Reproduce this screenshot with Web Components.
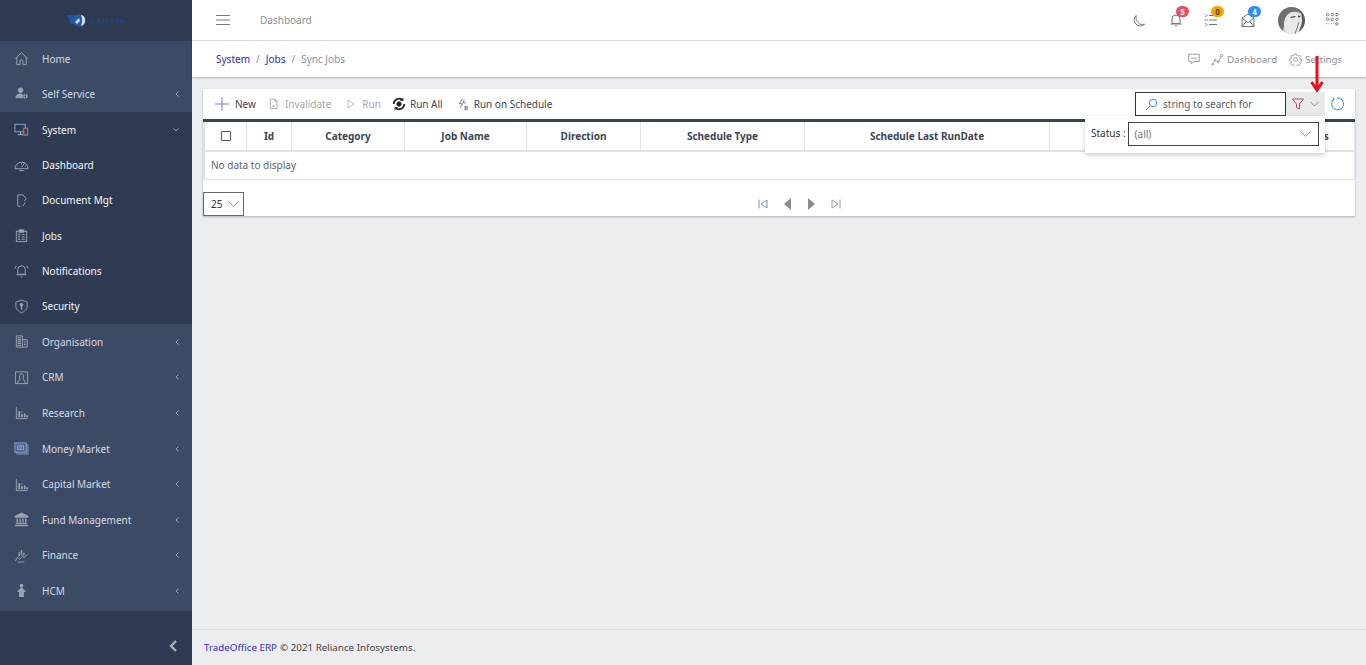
<!DOCTYPE html>
<html>
<head>
<meta charset="utf-8">
<title>Sync Jobs</title>
<style>
  html, body { margin: 0; height: 100%; overflow: hidden; }
  body { font-family: "Noto Sans", "Open Sans", sans-serif; font-size: 10px; background: #ebedf0; }
  app-shell { height: 665px; }
</style>
</head>
<body>
<app-shell>
  <side-bar slot="side">
    <div class="group light" slot="a" style="--row:35.2px;padding-bottom:.6px">
      <nav-item icon="home">Home</nav-item>
      <nav-item icon="self" arrow="left">Self Service</nav-item>
    </div>
    <div class="group" slot="b" style="--row:35.33px">
      <nav-item icon="system" arrow="down" bright>System</nav-item>
      <nav-item icon="gauge" bright>Dashboard</nav-item>
      <nav-item icon="doc" bright>Document Mgt</nav-item>
      <nav-item icon="clip" bright>Jobs</nav-item>
      <nav-item icon="bell" bright>Notifications</nav-item>
      <nav-item icon="shield" bright>Security</nav-item>
    </div>
    <div class="group light" slot="c" style="--row:35.6px;padding-bottom:2.2px">
      <nav-item icon="org" arrow="left">Organisation</nav-item>
      <nav-item icon="crm" arrow="left">CRM</nav-item>
      <nav-item icon="bars" arrow="left">Research</nav-item>
      <nav-item icon="money" arrow="left">Money Market</nav-item>
      <nav-item icon="bars" arrow="left">Capital Market</nav-item>
      <nav-item icon="bank" arrow="left">Fund Management</nav-item>
      <nav-item icon="finance" arrow="left">Finance</nav-item>
      <nav-item icon="person" arrow="left">HCM</nav-item>
    </div>
  </side-bar>
  <top-bar slot="main"></top-bar>
  <sub-bar slot="main"></sub-bar>
  <jobs-card slot="main"></jobs-card>
  <app-footer slot="foot"></app-footer>
</app-shell>

<script>
var ICONS = {
  home: '<path d="M1.500 8L8 1.800 14.500 8M3 7v7.500h3.500V11a1.500 1.500 0 0 1 3 0v3.500H13V7"/>',
  self: '<circle cx="7" cy="4.500" r="2.500" fill="currentColor"/><path d="M2 12.500c0-2.500 2-4 4.500-4 1 0 2 .2 2.500.6v3.400z" fill="currentColor"/><circle cx="12" cy="11" r="1.700" stroke-width="1.600" stroke-dasharray="2 .7"/>',
  system: '<rect x="1" y="2.500" width="11" height="8" stroke="#7fb0d8"/><path d="M4 13.500h6M7 10.500v3" stroke="#a9c3d8"/><rect x="10.500" y="6.500" width="4" height="7.500" fill="#2f3b52" stroke="#c08a7a"/>',
  gauge: '<path d="M1 12.500a7 7 0 1 1 14 0zM8 11l3.500-5M3.500 9.500l1 .5M12.500 9.500l-1 .5M8 6.500V8M5.500 14.500h5"/>',
  doc: '<path d="M4 14V2h5.500l3.500 4-2 2.500M4 14h3M12 10l-2.500 4"/>',
  clip: '<rect x="2.500" y="3.500" width="11" height="11"/><rect x="5.500" y="2" width="5" height="2.500" fill="currentColor"/><path d="M8 7h3.500M8 9.500h3.500M8 12h3.500" /><path d="M4.500 7h2M4.500 9.500h2M4.500 12h2" stroke-width="1.500"/>',
  bell: '<path d="M4 12V7a4 4 0 0 1 8 0v5zM2.500 12.500h11M7 14.800h2M1 6l1.500-3M15 6l-1.500-3"/>',
  shield: '<path d="M8 1.200l6 2v5c0 3-3 5.300-6 6.500-3-1.200-6-3.500-6-6.500v-5z"/><circle cx="8" cy="6" r="1.500" fill="currentColor"/><path d="M8 7v4.500" stroke-width="1.500"/>',
  org: '<path d="M2.500 14V2h6.500v12M9 6h5v8H2.500" stroke-width="1"/><path d="M4 4h3.500M4 6h3.500M4 8h3.500M4 10h3.500M4 12h3.500M10.500 8.500h2M10.500 11h2" stroke-width="1.200"/>',
  crm: '<path d="M1.500 2h13v12.500h-13zM4 14.500c0-2.500.5-3.500 2.500-4.500-1-2-1-6 1.500-6s2.500 4 1.500 6c2 1 2.500 2 2.500 4.500"/>',
  bars: '<path d="M2.500 2v12.500h12" stroke-width="1"/><path d="M5.500 13V6.500M8.500 13V9.500M8.500 8V7M11.500 13V9M14 13v-2" stroke-width="1.800"/>',
  money: '<rect x="3" y="4" width="12" height="10" fill="#55678a" stroke="#7d8ca6"/><rect x="1" y="2" width="12" height="10" fill="#4f6690" stroke="#86a3cc"/><rect x="4" y="5" width="6" height="4"/><circle cx="7" cy="7" r="1"/>',
  bank: '<path d="M8 1l7 3.500v1H1v-1z" fill="currentColor"/><path d="M3.500 7v4.500M6.500 7v4.500M9.500 7v4.500M12.500 7v4.500" stroke-width="1.500"/><path d="M2 12.500h12M1 14.500h14" stroke-width="1.300"/>',
  finance: '<path d="M1.500 14l2-4 2.500 2 3-3 2 1 3-3" stroke-width="1"/><path d="M5.500 9V4.500M8 8V2M10.500 8V5" stroke-width="1.500"/><path d="M4 15h7"/>',
  person: '<circle cx="8" cy="2.800" r="2" fill="currentColor" stroke="none"/><path d="M8 4.500l5 4.500-2.500.5V15h-5V9.500L3 9z" fill="currentColor" stroke="none"/>'
};

function svg(inner, size, vb, extra) {
  return '<svg xmlns="http://www.w3.org/2000/svg" width="' + size + '" height="' + size + '" viewBox="0 0 ' + (vb || 16) + ' ' + (vb || 16) + '" fill="none" stroke="currentColor" stroke-width="1" ' + (extra || '') + '>' + inner + '</svg>';
}

class AppShell extends HTMLElement {
  constructor() {
    super();
    this.attachShadow({mode: 'open'});
    this.shadowRoot.innerHTML = `
      <style>
        :host { display: flex; width: 1366px; }
        .main { flex: 1; display: flex; flex-direction: column; min-width: 0; }
        .fill { flex: 1; display: flex; flex-direction: column; }
        ::slotted(side-bar) { flex: none; }
      </style>
      <slot name="side"></slot>
      <div class="main"><div class="fill"><slot name="main"></slot></div><slot name="foot"></slot></div>`;
  }
}
customElements.define('app-shell', AppShell);

class SideBar extends HTMLElement {
  constructor() {
    super();
    this.attachShadow({mode: 'open'});
    this.shadowRoot.innerHTML = `
      <style>
        :host { display: flex; flex-direction: column; width: 192px; height: 665px; background: #2f3b52; }
        .logo { height: 41px; display: flex; align-items: center; justify-content: center; gap: 3px; box-sizing: border-box; }
        .logo span { font: bold 6px "Noto Sans", sans-serif; letter-spacing: 1.500px; color: #1d4a8c; }
        ::slotted(.group) { display: flex; flex-direction: column; }
        ::slotted(.light) { background: #3b4b66; }
        .end { flex: 1; display: flex; align-items: flex-end; justify-content: flex-end; padding: 0 14px 13px 0; color: #a7afbd; }
      </style>
      <div class="logo">
        <svg width="22" height="15" viewBox="0 0 22 15">
          <path d="M0 2h9l1 1-1 3-2 4-2 2-1-3-1-2 1-1-2-1z" fill="#1b55a8"/>
          <circle cx="13" cy="7.500" r="6" fill="#1f5bb0"/>
          <path d="M15 1.800a6 6 0 0 1 0 11.400c1.500-3.500 1.500-8 0-11.400z" fill="#d9dde4"/>
          <path d="M9 9l4-4 1 3-3 3z" fill="#cfd8e6"/>
        </svg>
        <span>GRIFFIN</span>
      </div>
      <slot name="a"></slot><slot name="b"></slot><slot name="c"></slot>
      <div class="end"><svg width="10" height="12" viewBox="0 0 10 12" fill="none" stroke="currentColor" stroke-width="2.400"><path d="M8 1L3 6l5 5"/></svg></div>`;
  }
}
customElements.define('side-bar', SideBar);

class NavItem extends HTMLElement {
  constructor() {
    super();
    this.attachShadow({mode: 'open'});
    var arrow = this.getAttribute('arrow');
    var arrowSvg = '';
    if (arrow == 'left') arrowSvg = '<svg class="ar" width="6" height="8" viewBox="0 0 6 8" fill="none" stroke="currentColor"><path d="M4.500 1.500L2 4l2.500 2.500"/></svg>';
    if (arrow == 'down') arrowSvg = '<svg class="ar" width="8" height="6" viewBox="0 0 8 6" fill="none" stroke="currentColor"><path d="M1.500 1.500L4 4l2.500-2.500"/></svg>';
    this.shadowRoot.innerHTML = `
      <style>
        :host { display: flex; align-items: center; height: var(--row, 35.5px); padding-left: 14px; padding-right: 12px; color: #d5dae3; }
        :host([bright]) { color: #f4f6f9; }
        .ic { width: 15px; height: 15px; color: #9aa3b3; margin-right: 13px; flex: none; display: flex; }
        .tx { flex: 1; white-space: nowrap; }
        .ar { color: #9aa3b3; flex: none; }
      </style>
      <span class="ic">${svg(ICONS[this.getAttribute('icon')], 15)}</span>
      <span class="tx"><slot></slot></span>${arrowSvg}`;
  }
}
customElements.define('nav-item', NavItem);

class TopBar extends HTMLElement {
  constructor() {
    super();
    this.attachShadow({mode: 'open'});
    this.shadowRoot.innerHTML = `
      <style>
        :host { display: flex; align-items: center; height: 40px; background: #fff; border-bottom: 1px solid #dcdee2; padding: 0 25px 0 24px; color: #6e7480; }
        .title { margin-left: 30px; flex: 1; color: #8a8f99; }
        .burger { display: flex; }
        .right { display: flex; align-items: center; }
        .ic { position: relative; display: flex; width: 16px; height: 16px; }
        .badge { position: absolute; top: -6px; left: 8px; min-width: 13px; height: 11px; border-radius: 6px; font: 700 8px "Noto Sans", sans-serif; line-height: 11px; text-align: center; color: #fff; }
        .av { width: 27px; height: 27px; display: block; }
      </style>
      <svg class="burger" width="14" height="12" viewBox="0 0 14 12" stroke="#77777f" stroke-width="1"><path d="M0 1.500h14M0 6h14M0 10.500h14"/></svg>
      <span class="title">Dashboard</span>
      <div class="right">
        <span class="ic" style="margin-right:21px;margin-top:4px">${svg('<path d="M5.500 1.500a6.500 6.500 0 1 0 9 9.500C9 12.500 4.500 8 5.500 1.500z"/>', 15)}</span>
        <span class="ic" style="margin-right:19px">${svg('<path d="M4 11.500V7a4 4 0 0 1 8 0v4.500zM2.500 12h11M7 14h2"/>', 16)}<b class="badge" style="background:#e8505b">5</b></span>
        <span class="ic" style="margin-right:21px">${svg('<path d="M6 3.500h8M6 8h8M6 12.500h8"/><circle cx="3" cy="3.500" r="1.200" stroke-dasharray="1 1"/><circle cx="3" cy="8" r="1.200" stroke-dasharray="1 1"/><circle cx="3" cy="12.500" r="1.200" stroke-dasharray="1 1"/>', 16)}<b class="badge" style="background:#f2a60c;color:#5c4300">0</b></span>
        <span class="ic" style="margin-right:22px">${svg('<path d="M2 6l6-4 6 4v8.500H2zM2 6l6 4.500L14 6M2 14.500l4.500-5.500M14 14.500L9.500 9"/>', 16)}<b class="badge" style="background:#2e8ff0">4</b></span>
        <svg class="av" style="margin-right:20px" viewBox="0 0 27 27">
          <defs><clipPath id="c"><circle cx="13.500" cy="13.500" r="13.500"/></clipPath></defs>
          <g clip-path="url(#c)">
            <rect width="27" height="27" fill="#c9c9c9"/>
            <path d="M0 0h27v10c-3-4-7-6-12-5-6 1-9 6-9 14l-2 8H0z" fill="#6f6f6f"/>
            <path d="M6 19c0-8 3-13 9-14 5 0 8 3 9 7 1 6-2 15-9 15H8z" fill="#e8e8e8"/>
            <path d="M12 10l5-1 1 1-5 1zM20 8l3 2-3 .5z" fill="#444"/>
            <path d="M23 4l4 5v18h-7l2-6c3-5 2-11 1-17z" fill="#5a5a5a"/>
            <path d="M17 27l4-12" stroke="#777" stroke-width="1"/>
          </g>
        </svg>
        <span class="ic">${svg('<g stroke="currentColor" fill="none"><rect x="1.500" y="1.500" width="2.500" height="2.500" rx="1"/><rect x="6.500" y="1.500" width="2.500" height="2.500" rx="1"/><rect x="11.500" y="1.500" width="2.500" height="2.500" rx="1"/><rect x="1.500" y="6.500" width="2.500" height="2.500" rx="1"/><rect x="6.500" y="6.500" width="2.500" height="2.500" rx="1"/><rect x="11.500" y="6.500" width="2.500" height="2.500" rx="1"/><path d="M1.500 12.500h2.500M6.500 12.500H9" stroke-dasharray="1 1"/><rect x="11.500" y="11.500" width="2.500" height="2.500" rx="1"/></g>', 15)}</span>
      </div>`;
  }
}
customElements.define('top-bar', TopBar);

class SubBar extends HTMLElement {
  constructor() {
    super();
    this.attachShadow({mode: 'open'});
    this.shadowRoot.innerHTML = `
      <style>
        :host { display: flex; align-items: center; height: 36px; background: #fff; box-shadow: 0 1px 2px rgba(0,0,0,.25); padding: 0 24px; color: #8a8f99; position: relative; }
        a { color: #2a1fd0; text-decoration: none; }
        .sep { margin: 0 6px; }
        .sp { flex: 1; }
        .ln { display: flex; align-items: center; gap: 3px; color: #8a8f99; font-size: 9.700px; }
      </style>
      <a>System</a><span class="sep">/</span><a>Jobs</a><span class="sep">/</span><span>Sync Jobs</span>
      <span class="sp"></span>
      <span class="ln" style="margin-right:10px">${svg('<path d="M2 2.500h12v8.500H7.500L5 13.500V11H2zM5 7h6"/>', 14)}</span>
      <span class="ln" style="margin-right:12px">${svg('<path d="M2 14l3-5 4 2 3.500-7"/><circle cx="5" cy="8.500" r="1"/><circle cx="9" cy="11" r="1"/><circle cx="13" cy="3" r="1.500"/><circle cx="2" cy="14" r="1"/>', 13)}Dashboard</span>
      <span class="ln">${svg('<circle cx="8" cy="8" r="2.300"/><path d="M7 1h2l.5 2 1.500.7 1.800-1 1.400 1.400-1 1.800.7 1.600 2 .5v2l-2 .5-.7 1.600 1 1.800-1.400 1.400-1.800-1-1.500.7-.5 2H7l-.5-2-1.500-.7-1.800 1-1.400-1.400 1-1.800L2.600 10l-2-.5v-2l2-.5.7-1.600-1-1.800 1.400-1.400 1.800 1 1.500-.7z"/>', 13)}Settings</span>`;
  }
}
customElements.define('sub-bar', SubBar);

class ToolButton extends HTMLElement {
  constructor() {
    super();
    this.attachShadow({mode: 'open'});
    this.shadowRoot.innerHTML = `
      <style>
        :host { display: inline-flex; align-items: center; gap: 5px; white-space: nowrap; color: #3d4654; }
        :host([off]) { color: #a4a8af; }
      </style><slot name="icon"></slot><slot></slot>`;
  }
}
customElements.define('tool-button', ToolButton);

class JobsCard extends HTMLElement {
  constructor() {
    super();
    this.attachShadow({mode: 'open'});
    // the column before Status sits behind the filter popup, so it stays empty
    var cols = ['Id', 'Category', 'Job Name', 'Direction', 'Schedule Type', 'Schedule Last RunDate', '', 'Status'];
    var heads = cols.map(function(c) { return '<div class="th">' + c + '</div>'; }).join('');
    this.shadowRoot.innerHTML = `
      <style>
        :host { display: block; position: relative; margin: 12px 11px 0; background: #fff; height: 127px; box-shadow: 0 1px 2px rgba(0,0,0,.25); color: #3d4654; }
        .tools { display: flex; align-items: center; height: 30px; padding-left: 12px; }
        .sp { flex: 1; }
        .search { display: flex; align-items: center; gap: 5px; box-sizing: border-box; width: 151px; height: 24px; border: 1px solid #2e3340; padding-left: 9px; color: #555d6b; }
        .filter { display: flex; align-items: center; justify-content: center; gap: 6px; width: 39px; height: 24px; background: #e9e9e9; color: #b2506b; }
        .refresh { width: 24px; margin-right: 6px; display: flex; justify-content: center; color: #2e8ff0; }
        .grid { display: grid; grid-template-columns: 43px 45px 113px 122px 114px 164px 245px 222px 1fr; border-top: 3px solid #34435e; }
        .th { height: 30px; box-sizing: border-box; display: flex; align-items: center; justify-content: center; font-weight: 700; color: #3b4658; border-left: 1px solid #e0e2e6; border-bottom: 2px solid #dfe1e5; }
        .th:first-child { border-left: 2px solid #e0e2e6; }
        .th:last-child { border-right: 1px solid #e0e2e6; }
        .box { width: 8px; height: 8px; border: 1px solid #555; border-radius: 1px; }
        .none { height: 28px; box-sizing: border-box; display: flex; align-items: center; padding: 0 0 1px 6px; color: #5c6470; border: 1px solid #e0e2e6; border-top: 0; border-left-width: 2px; }
        .pager { display: flex; align-items: center; height: 24px; margin-top: 12px; color: #8d8d85; }
        .nav { flex: 1; display: flex; align-items: center; justify-content: center; gap: 15px; }
        .size { flex: none; box-sizing: border-box; width: 41px; height: 24px; border: 1px solid #666; display: flex; align-items: center; justify-content: space-between; padding: 0 4px 0 7px; color: #333; }
        .pop { position: absolute; left: 882px; top: 27px; width: 240px; height: 37px; background: #fff; box-shadow: 0 2px 5px rgba(0,0,0,.2); display: flex; align-items: center; box-sizing: border-box; padding: 0 6px 2px; gap: 2px; color: #333; }
        .pop .lb { margin-top: -1px; white-space: nowrap; }
        .sel { flex: 1; height: 24px; box-sizing: border-box; border: 1px solid #444; display: flex; align-items: center; justify-content: space-between; padding: 0 7px 0 6px; color: #777; }
        .red { position: absolute; left: 1107px; top: -33px; }
        .pager svg { display: block; }
      </style>
      <div class="tools">
        <tool-button style="gap:6px"><span slot="icon" style="display:flex;color:#6d87b8">${svg('<path d="M7 0v14M0 7h14"/>', 14, 14)}</span>New</tool-button>
        <tool-button off style="margin-left:12px"><span slot="icon" style="display:flex;color:#8f959d">${svg('<path d="M3 1.500h6l3 3V14H3zM6 9l3 3M9 9l-3 3M9 1.500v3h3"/>', 12)}</span>Invalidate</tool-button>
        <tool-button off style="margin-left:14px"><span slot="icon" style="display:flex">${svg('<path d="M4 2.500l8 5.500-8 5.500z"/>', 12)}</span>Run</tool-button>
        <tool-button style="margin-left:11px;gap:4px"><span slot="icon" style="display:flex;color:#222">${svg('<circle cx="8" cy="8" r="2.500" fill="currentColor"/><path d="M2 8a6 6 0 0 1 10.500-4M14 8a6 6 0 0 1-10.500 4" stroke-width="2"/><path d="M12.500 1v3h-3M3.500 15v-3h3"/>', 14)}</span>Run All</tool-button>
        <tool-button style="margin-left:13px"><span slot="icon" style="display:flex;color:#55657e">${svg('<path d="M8 1L4 7h4l-3 5M10 2l-1 4h3"/><path d="M10 11h5M10 13.500h5M11.500 9.500v6M13.500 9.500v6" stroke-width=".8"/>', 13)}</span>Run on Schedule</tool-button>
        <span class="sp"></span>
        <div class="search"><svg width="13" height="13" viewBox="0 0 13 13" fill="none" stroke="#2e8ff0"><circle cx="8" cy="5" r="3.800"/><path d="M5 8l-4 4"/></svg><span>string to search for</span></div>
        <div class="filter"><svg width="12" height="12" viewBox="0 0 12 12" fill="none" stroke="currentColor"><path d="M.5 1h11L7.500 6v5l-3-1.500V6z"/></svg><svg width="9" height="6" viewBox="0 0 9 6" fill="none" stroke="#7d8a99"><path d="M.5 1l4 4 4-4"/></svg></div>
        <div class="refresh"><svg width="14" height="14" viewBox="0 0 14 14" fill="none" stroke="currentColor"><path d="M4 2.200A6 6 0 1 0 7 1M3 .5l1.200 2-2 1"/></svg></div>
      </div>
      <div class="grid">
        <div class="th"><span class="box"></span></div>${heads}
      </div>
      <div class="none">No data to display</div>
      <div class="pager">
        <div class="size">25<svg width="11" height="6" viewBox="0 0 11 6" fill="none" stroke="#8a99ad"><path d="M.5.500l5 5 5-5"/></svg></div>
        <div class="nav">
          <svg width="10" height="10" viewBox="0 0 10 10" fill="none" stroke="#6d8fc0"><path d="M1 .5v9M9 1L3 5l6 4z"/></svg>
          <svg width="9" height="12" viewBox="0 0 9 12" fill="#8d8d85"><path d="M8 0v12L1 6z"/></svg>
          <svg width="9" height="12" viewBox="0 0 9 12" fill="#8d8d85"><path d="M1 0v12l7-6z"/></svg>
          <svg width="10" height="10" viewBox="0 0 10 10" fill="none" stroke="#9a9a90"><path d="M9 .5v9M1 1l6 4-6 4z"/></svg>
        </div>
      </div>
      <div class="pop"><span class="lb">Status :</span><div class="sel">(all)<svg width="11" height="6" viewBox="0 0 11 6" fill="none" stroke="#999"><path d="M.5.500l5 5 5-5"/></svg></div></div>
      <svg class="red" width="14" height="37" viewBox="0 0 14 37" fill="none" stroke="#e8101f" stroke-width="3"><path d="M7 0v33M1.500 26L7 34l5.500-8"/></svg>`;
  }
}
customElements.define('jobs-card', JobsCard);

class AppFooter extends HTMLElement {
  constructor() {
    super();
    this.attachShadow({mode: 'open'});
    this.shadowRoot.innerHTML = `
      <style>
        :host { display: flex; align-items: center; height: 35px; border-top: 1px solid #dcdee2; padding-left: 12px; color: #444; font-size: 9.800px; }
        a { color: #3a2fd0; margin-right: 3px; }
      </style><a>TradeOffice ERP</a> © 2021 Reliance Infosystems.`;
  }
}
customElements.define('app-footer', AppFooter);
</script>
</body>
</html>
